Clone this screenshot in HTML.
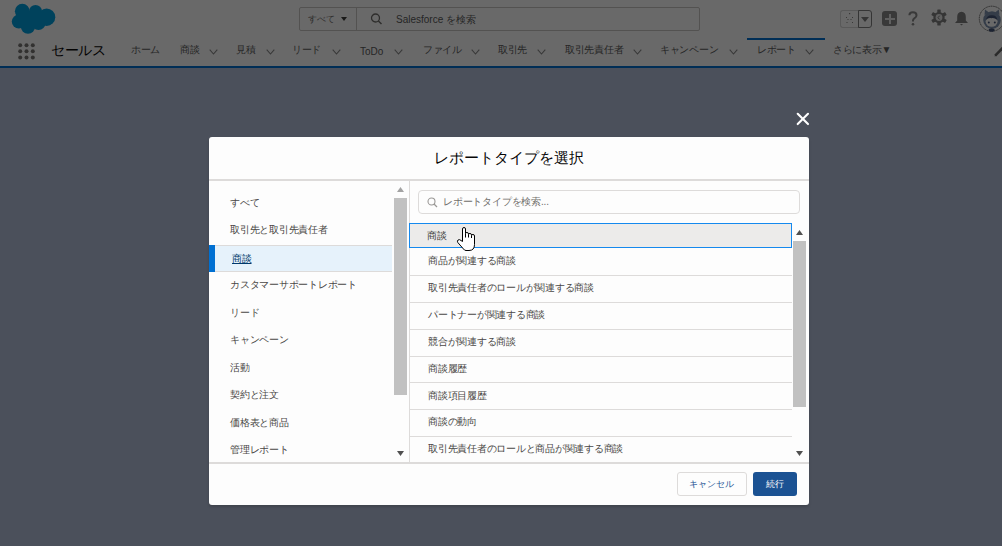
<!DOCTYPE html>
<html><head><meta charset="utf-8">
<style>
*{box-sizing:border-box;margin:0;padding:0}
html,body{width:1002px;height:546px;overflow:hidden;background:#b7c3de;font-family:"Liberation Sans",sans-serif;}
.a{position:absolute;white-space:nowrap}
#hdr{position:absolute;left:0;top:0;width:1002px;height:66px;background:#fff}
#line{position:absolute;left:0;top:66px;width:1002px;height:2px;background:#0070d2}
#ov{position:absolute;left:0;top:0;width:1002px;height:546px;background:rgba(0,0,0,0.59)}
.nav{font-size:10px;color:#5c5c5c;top:44px;line-height:12px;letter-spacing:-0.3px}
.chev{position:absolute;top:49px;width:9px;height:6px}
#modal{position:absolute;left:209px;top:137px;width:600px;height:368px;background:#fdfdfd;border-radius:3px;overflow:hidden;box-shadow:0 2px 3px rgba(0,0,0,0.16)}
.li{position:absolute;left:0;width:183px;height:27.5px;font-size:10px;color:#4a4846;line-height:26.5px;padding-left:21px;letter-spacing:-0.25px}
.row{position:absolute;left:201px;width:382px;height:26.9px;border-bottom:1px solid #dddbda;font-size:10px;color:#4a4846;line-height:24px;padding-left:18px;letter-spacing:-0.25px}
</style></head><body>
<div id="hdr">
  <svg class="a" style="left:0;top:0" width="60" height="38" viewBox="0 0 60 38">
    <g fill="#00a1e0">
      <circle cx="22.3" cy="11.2" r="7.4"/>
      <circle cx="35.5" cy="11.4" r="6.5"/>
      <circle cx="46.6" cy="17.2" r="8.7"/>
      <circle cx="18.8" cy="21.6" r="7"/>
      <circle cx="28" cy="26.6" r="7.2"/>
      <circle cx="38.5" cy="23" r="7"/>
      <rect x="20" y="12" width="24" height="14"/>
    </g>
  </svg>
  <!-- search -->
  <div class="a" style="left:299px;top:7px;width:401px;height:24px;border:1px solid #c9c7c5;border-radius:2px"></div>
  <div class="a" style="left:356px;top:7px;width:1px;height:24px;background:#c9c7c5"></div>
  <div class="a" style="left:308px;top:13px;font-size:9px;color:#706e6b;line-height:12px">すべて</div>
  <svg class="a" style="left:341px;top:17px" width="6" height="4"><path d="M0 0H6L3 4Z" fill="#3e3e3c"/></svg>
  <svg class="a" style="left:370px;top:13px" width="13" height="12" viewBox="0 0 13 12"><circle cx="5.5" cy="5" r="4" fill="none" stroke="#706e6b" stroke-width="1.3"/><path d="M8.4 8L11.5 11" stroke="#706e6b" stroke-width="1.5"/></svg>
  <div class="a" style="left:396px;top:13px;font-size:10px;color:#5c5c5c;line-height:13px">Salesforce を検索</div>
  <!-- right icons -->
  <div class="a" style="left:840px;top:10px;width:19px;height:18px;border:1px solid #d8d8d8;border-right:none;border-radius:3px 0 0 3px"></div>
  <svg class="a" style="left:842px;top:12px" width="15" height="14" viewBox="0 0 15 14"><g fill="#8a8886"><rect x="7" y="1" width="1.2" height="1.2"/><rect x="4" y="5" width="1" height="1"/><rect x="10" y="5" width="1" height="1"/><rect x="5.5" y="7" width="1" height="1"/><rect x="8.5" y="7" width="1" height="1"/><rect x="4.5" y="10" width="1" height="1"/><rect x="10" y="10" width="1" height="1"/></g></svg>
  <div class="a" style="left:858px;top:10px;width:14px;height:18px;border:1px solid #808080;border-radius:0 3px 3px 0"></div>
  <svg class="a" style="left:861px;top:17px" width="8" height="5"><path d="M0 0H8L4 5Z" fill="#808080"/></svg>
  <div class="a" style="left:882px;top:11px;width:15px;height:15px;background:#8a8a8a;border-radius:3px"></div>
  <div class="a" style="left:884.5px;top:17.5px;width:10px;height:2px;background:#e8e8e8"></div>
  <div class="a" style="left:888.5px;top:13.5px;width:2px;height:10px;background:#e8e8e8"></div>
  <svg class="a" style="left:906px;top:10px" width="14" height="17" viewBox="906 10 14 17"><path d="M909.4 15.3Q909.4 12.2 912.9 12.2Q916.5 12.2 916.5 15.2Q916.5 17.1 914.6 18.1Q913 19 913 20.6V21.6" fill="none" stroke="#8a8a8a" stroke-width="2"/><circle cx="913" cy="24.3" r="1.3" fill="#8a8a8a"/></svg>
  <svg class="a" style="left:931px;top:9px" width="16" height="17" viewBox="-8 -8.5 16 17"><g fill="#808080"><circle r="5.6"/><rect x="-1.7" y="-8" width="3.4" height="3.6" rx="0.6"/><rect x="-1.7" y="-8" width="3.4" height="3.6" rx="0.6" transform="rotate(60)"/><rect x="-1.7" y="-8" width="3.4" height="3.6" rx="0.6" transform="rotate(120)"/><rect x="-1.7" y="-8" width="3.4" height="3.6" rx="0.6" transform="rotate(180)"/><rect x="-1.7" y="-8" width="3.4" height="3.6" rx="0.6" transform="rotate(240)"/><rect x="-1.7" y="-8" width="3.4" height="3.6" rx="0.6" transform="rotate(300)"/></g><circle r="3.4" fill="#e8e8e8"/><path d="M0.6 -1.8L-1 0.2L0.6 2" fill="none" stroke="#808080" stroke-width="1"/></svg>
  <svg class="a" style="left:954px;top:11px" width="15" height="15" viewBox="0 0 15 15"><path d="M7.5 0.8C4.6 0.8 3.2 3 3.2 6V9.5L1 12H14L11.8 9.5V6C11.8 3 10.4 0.8 7.5 0.8Z" fill="#808080"/><path d="M6 13H9L7.5 14.5Z" fill="#808080"/></svg>
  <svg class="a" style="left:976px;top:4px" width="26" height="30" viewBox="976 4 26 30">
    <circle cx="991.8" cy="18.7" r="12.5" fill="#fff" stroke="#555" stroke-width="0.9" stroke-dasharray="1.2 0.6"/>
    <circle cx="992" cy="20" r="8.8" fill="#7f93b0"/>
    <path d="M984.5 15L985 9.5L989 12.5Z M999.5 15L998.8 9.5L995 12.5Z" fill="#7f93b0"/>
    <ellipse cx="991.6" cy="21.6" rx="6" ry="5.2" fill="#fff"/>
    <path d="M985.8 20Q987 14.8 991.8 15.2Q996.8 15 997.4 20Q994 17.5 991.5 18.3Q988.5 17.5 985.8 20Z" fill="#46567a"/>
    <circle cx="988.8" cy="22.5" r="1" fill="#46567a"/><circle cx="994.8" cy="22.5" r="1" fill="#46567a"/>
    <ellipse cx="991.6" cy="30" rx="3" ry="1.8" fill="#46567a"/>
  </svg>
  <!-- nav -->
  <svg class="a" style="left:18px;top:43px" width="18" height="17" viewBox="0 0 18 17">
    <g fill="#7a7876">
      <circle cx="2.2" cy="2.2" r="2"/><circle cx="8.5" cy="2.2" r="2"/><circle cx="14.8" cy="2.2" r="2"/>
      <circle cx="2.2" cy="8.3" r="2"/><circle cx="8.5" cy="8.3" r="2"/><circle cx="14.8" cy="8.3" r="2"/>
      <circle cx="2.2" cy="14.4" r="2"/><circle cx="8.5" cy="14.4" r="2"/><circle cx="14.8" cy="14.4" r="2"/>
    </g>
  </svg>
  <div class="a" style="left:51px;top:42px;font-size:14px;color:#080707;line-height:16px;letter-spacing:-0.5px">セールス</div>
  <div class="a nav" style="left:131px">ホーム</div>
  <div class="a nav" style="left:180px">商談</div>
  <div class="a nav" style="left:236px">見積</div>
  <div class="a nav" style="left:292px">リード</div>
  <div class="a nav" style="left:360px;top:45.5px;letter-spacing:0">ToDo</div>
  <div class="a nav" style="left:423px">ファイル</div>
  <div class="a nav" style="left:498px">取引先</div>
  <div class="a nav" style="left:565px">取引先責任者</div>
  <div class="a nav" style="left:660px">キャンペーン</div>
  <div class="a nav" style="left:757px">レポート</div>
  <div class="a nav" style="left:833px">さらに表示▼</div>
  <svg class="chev" style="left:209px" viewBox="0 0 9 6"><path d="M0.7 0.7L4.5 5L8.3 0.7" fill="none" stroke="#8a8a8a" stroke-width="1.1"/></svg>
  <svg class="chev" style="left:266px" viewBox="0 0 9 6"><path d="M0.7 0.7L4.5 5L8.3 0.7" fill="none" stroke="#8a8a8a" stroke-width="1.1"/></svg>
  <svg class="chev" style="left:332px" viewBox="0 0 9 6"><path d="M0.7 0.7L4.5 5L8.3 0.7" fill="none" stroke="#8a8a8a" stroke-width="1.1"/></svg>
  <svg class="chev" style="left:394px" viewBox="0 0 9 6"><path d="M0.7 0.7L4.5 5L8.3 0.7" fill="none" stroke="#8a8a8a" stroke-width="1.1"/></svg>
  <svg class="chev" style="left:471px" viewBox="0 0 9 6"><path d="M0.7 0.7L4.5 5L8.3 0.7" fill="none" stroke="#8a8a8a" stroke-width="1.1"/></svg>
  <svg class="chev" style="left:537px" viewBox="0 0 9 6"><path d="M0.7 0.7L4.5 5L8.3 0.7" fill="none" stroke="#8a8a8a" stroke-width="1.1"/></svg>
  <svg class="chev" style="left:633px" viewBox="0 0 9 6"><path d="M0.7 0.7L4.5 5L8.3 0.7" fill="none" stroke="#8a8a8a" stroke-width="1.1"/></svg>
  <svg class="chev" style="left:729px" viewBox="0 0 9 6"><path d="M0.7 0.7L4.5 5L8.3 0.7" fill="none" stroke="#8a8a8a" stroke-width="1.1"/></svg>
  <svg class="chev" style="left:805px" viewBox="0 0 9 6"><path d="M0.7 0.7L4.5 5L8.3 0.7" fill="none" stroke="#8a8a8a" stroke-width="1.1"/></svg>
  <div class="a" style="left:747px;top:38px;width:78px;height:2px;background:#0070d2"></div>
  <svg class="a" style="left:992px;top:44px" width="10" height="14" viewBox="992 44 10 14"><path d="M995.2 55.6L1003 47.5" stroke="#6a6a6a" stroke-width="2.6"/><path d="M994.6 56.4L995.3 54L997 55.5Z" fill="#6a6a6a"/></svg>
</div>
<div id="line"></div>
<div id="ov"></div>
<!-- close -->
<svg class="a" style="left:795px;top:111px" width="16" height="16" viewBox="0 0 16 16"><path d="M2.7 2.8L13 13.1M13 2.8L2.7 13.1" stroke="#fff" stroke-width="2.1" stroke-linecap="round"/></svg>

<div id="modal">
  <div class="a" style="left:0;top:42px;width:600px;height:2px;background:#dddbda"></div>
  <div class="a" style="left:0;top:12px;width:600px;text-align:center;font-size:15px;color:#080707;line-height:18px">レポートタイプを選択</div>
  <!-- left nav -->
  <div class="li" style="top:52.5px">すべて</div>
  <div class="li" style="top:80px">取引先と取引先責任者</div>
  <div class="li" style="top:107.5px;background:#e6f2fb;border-top:1px solid #dddbda;border-bottom:1px solid #dddbda;line-height:25.5px;color:#00396b;padding-left:23px"><span style="text-decoration:underline">商談</span></div>
  <div class="a" style="left:0;top:107.5px;width:6px;height:27.5px;background:#0070d2"></div>
  <div class="li" style="top:135px">カスタマーサポートレポート</div>
  <div class="li" style="top:162.5px">リード</div>
  <div class="li" style="top:190px">キャンペーン</div>
  <div class="li" style="top:217.5px">活動</div>
  <div class="li" style="top:245px">契約と注文</div>
  <div class="li" style="top:272.5px">価格表と商品</div>
  <div class="li" style="top:300px">管理レポート</div>
  <!-- left scrollbar -->
  <svg class="a" style="left:188px;top:50px" width="8" height="5"><path d="M0 5H7L3.5 0Z" fill="#a3a3a3"/></svg>
  <div class="a" style="left:185px;top:61px;width:13px;height:197px;background:#c1c1c1"></div>
  <svg class="a" style="left:188px;top:314px" width="8" height="5"><path d="M0 0H7L3.5 5Z" fill="#505050"/></svg>
  <div class="a" style="left:200px;top:44px;width:1px;height:281px;background:#dddbda"></div>
  <!-- right panel -->
  <div class="a" style="left:209px;top:53px;width:382px;height:24px;border:1px solid #dddbda;border-radius:4px"></div>
  <svg class="a" style="left:218px;top:60px" width="11" height="11" viewBox="0 0 11 11"><circle cx="4.5" cy="4.5" r="3.5" fill="none" stroke="#9a9896" stroke-width="1.1"/><path d="M7 7L10 10" stroke="#9a9896" stroke-width="1.3"/></svg>
  <div class="a" style="left:234px;top:58px;font-size:10px;color:#706e6b;line-height:13px;letter-spacing:-0.2px">レポートタイプを検索...</div>
  <div class="a" style="left:200px;top:86px;width:383px;height:25px;background:#ecebea;border:1px solid #1589ee;font-size:10px;color:#3e3e3c;line-height:23px;padding-left:17px">商談</div>
  <div class="row" style="top:112px">商品が関連する商談</div>
  <div class="row" style="top:138.9px">取引先責任者のロールが関連する商談</div>
  <div class="row" style="top:165.8px">パートナーが関連する商談</div>
  <div class="row" style="top:192.7px">競合が関連する商談</div>
  <div class="row" style="top:219.6px">商談履歴</div>
  <div class="row" style="top:246.5px">商談項目履歴</div>
  <div class="row" style="top:273.4px">商談の動向</div>
  <div class="row" style="top:300.3px;border-bottom:none">取引先責任者のロールと商品が関連する商談</div>
  <!-- right scrollbar -->
  <svg class="a" style="left:587px;top:93px" width="8" height="5"><path d="M0 5H7L3.5 0Z" fill="#505050"/></svg>
  <div class="a" style="left:584px;top:104px;width:13px;height:166px;background:#c1c1c1"></div>
  <svg class="a" style="left:587px;top:314px" width="8" height="5"><path d="M0 0H7L3.5 5Z" fill="#505050"/></svg>
  <!-- footer -->
  <div class="a" style="left:0;top:325px;width:600px;height:2px;background:#dddbda"></div>
  <div class="a" style="left:468px;top:335px;width:70px;height:24px;border:1px solid #dddbda;border-radius:3px;background:#fdfdfd;font-size:9px;color:#1b5293;text-align:center;line-height:22px;padding-right:2px">キャンセル</div>
  <div class="a" style="left:544px;top:335px;width:44px;height:24px;border-radius:3px;background:#1b5293;font-size:9px;color:#fff;text-align:center;line-height:24px">続行</div>
  <!-- cursor -->
  <svg class="a" style="left:246px;top:88px" width="22" height="28" viewBox="0 0 22 28"><path d="M7.5 16.5V4Q7.5 2.5 9 2.5Q10.5 2.5 10.5 4V8.5Q10.5 7.5 12 7.5Q13.5 7.5 13.5 9V9.5Q13.5 8.5 15 8.5Q16.5 8.5 16.5 10V10.5Q16.5 9.5 18 9.5Q19.5 9.5 19.5 11V19.5Q19.5 25.5 14 25.5H11Q9.5 25.5 8.5 24L2.8 17.5Q2 16 3 15Q4.5 14 6 15.5Z" fill="#fff" stroke="#000" stroke-width="1" stroke-linejoin="round"/><path d="M10.5 8.5V12.5M13.5 9.5V12.5M16.5 10.5V13" stroke="#000" stroke-width="1"/></svg>
</div>
</body></html>
